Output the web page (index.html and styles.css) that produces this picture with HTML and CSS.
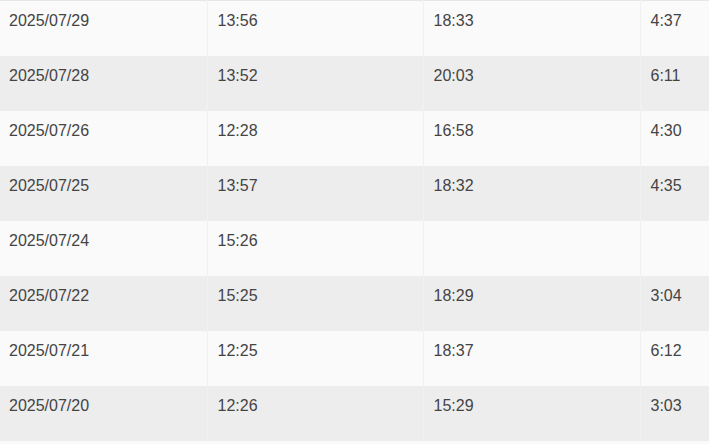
FILE: index.html
```html
<!DOCTYPE html>
<html>
<head>
<meta charset="utf-8">
<link rel="stylesheet" href="styles.css">
</head>
<body>
<div class="wrap">
<table class="log">
  <colgroup>
    <col class="c1"><col class="c2"><col class="c3"><col class="c4">
  </colgroup>
  <tbody>
    <tr><td>2025/07/29</td><td>13:56</td><td>18:33</td><td>4:37</td></tr>
    <tr><td>2025/07/28</td><td>13:52</td><td>20:03</td><td>6:11</td></tr>
    <tr><td>2025/07/26</td><td>12:28</td><td>16:58</td><td>4:30</td></tr>
    <tr><td>2025/07/25</td><td>13:57</td><td>18:32</td><td>4:35</td></tr>
    <tr><td>2025/07/24</td><td>15:26</td><td></td><td></td></tr>
    <tr><td>2025/07/22</td><td>15:25</td><td>18:29</td><td>3:04</td></tr>
    <tr><td>2025/07/21</td><td>12:25</td><td>18:37</td><td>6:12</td></tr>
    <tr><td>2025/07/20</td><td>12:26</td><td>15:29</td><td>3:03</td></tr>
  </tbody>
</table>
</div>
</body>
</html>
```
FILE: styles.css
```css
html, body {
  margin: 0;
  padding: 0;
  background: #fafafa;
}
.wrap {
  width: 709px;
  height: 444px;
  overflow: hidden;
}
.log {
  border-collapse: collapse;
  table-layout: fixed;
  width: 856px;
  border-top: 1px solid #e6e6e6;
  font-family: "Liberation Sans", Arial, sans-serif;
  font-size: 16px;
  color: #444;
}
.c1 { width: 207px; }
.c2 { width: 216px; }
.c3 { width: 217px; }
.c4 { width: 216px; }
.log td {
  height: 55px;
  box-sizing: border-box;
  padding: 10px 10px 25px 10px;
  line-height: 20px;
  vertical-align: top;
  border-left: 1px solid #f1f1f1;
}
.log td:first-child {
  border-left: none;
  padding-left: 9px;
}
.log tr:nth-child(odd) { background: #fafafa; }
.log tr:nth-child(even) { background: #ededed; }
```
